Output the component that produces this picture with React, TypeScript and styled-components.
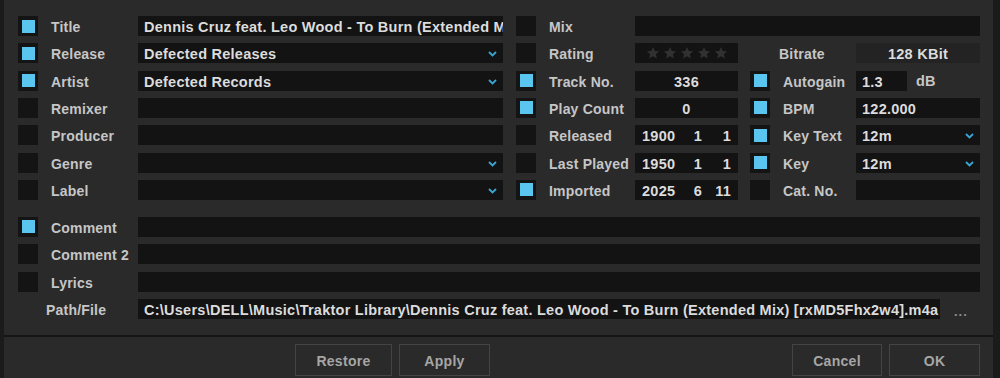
import React from "react";
import styled, { createGlobalStyle } from "styled-components";

const Global = createGlobalStyle`
  html, body { margin: 0; padding: 0; background: #2a2a2a; }
  body { font-family: "Liberation Sans", Arial, sans-serif; }
  * { box-sizing: border-box; }
`;

const Window = styled.div`
  width: 1000px;
  height: 378px;
  display: flex;
  flex-direction: column;
  background: #2a2a2a;
  border-left: 4px solid #1b1b1b;
  border-right: 7px solid #1b1b1b;
  overflow: hidden;
  font-family: "Liberation Sans", Arial, sans-serif;
  font-size: 14px;
  font-weight: bold;
  letter-spacing: 0.2px;
`;

const Form = styled.div`
  display: flex;
  flex-direction: column;
  gap: 17px;
  padding: 16px 0 16px 14px;
  border-bottom: 2px solid #151515;
`;

const TopGrid = styled.div`
  display: grid;
  grid-template-columns: 20px 100px 365px 13px 20px 99px 103px 12px 20px 86px 124px;
  grid-auto-rows: 20px;
  row-gap: 7.33px;
`;

const BottomGrid = styled.div`
  display: grid;
  grid-template-columns: 20px 100px 842px;
  grid-auto-rows: 20px;
  row-gap: 7.33px;
`;

const Check = styled.div<{ $on?: boolean; $col?: number }>`
  grid-column: ${(p) => p.$col ?? 1};
  width: 20px;
  height: 20px;
  background: #141414;
  display: flex;
  align-items: center;
  justify-content: center;
  &::after {
    content: "";
    width: 13px;
    height: 13px;
    background: ${(p) => (p.$on ? "#5ac6ef" : "transparent")};
  }
`;

const Label = styled.div<{ $col?: string; $indent?: number }>`
  grid-column: ${(p) => p.$col ?? "2"};
  padding-left: ${(p) => p.$indent ?? 13}px;
  color: #c6c6c6;
  line-height: 22px;
  white-space: nowrap;
`;

const Field = styled.div<{ $col?: string; $align?: string; $dim?: boolean; $width?: number }>`
  grid-column: ${(p) => p.$col ?? "3"};
  ${(p) => (p.$width ? `width: ${p.$width}px;` : "")}
  height: 20px;
  background: ${(p) => (p.$dim ? "#232323" : "#131313")};
  color: #dcdcdc;
  font-size: 14.5px;
  letter-spacing: 0.25px;
  line-height: 22px;
  padding: 0 6px;
  text-align: ${(p) => p.$align ?? "left"};
  white-space: nowrap;
  overflow: hidden;
  position: relative;
`;

const SelectField = styled(Field)`
  padding-right: 20px;
`;

const Chevron = styled.svg`
  position: absolute;
  right: 6px;
  top: 8px;
`;

const Select: React.FC<{ col?: string; children?: React.ReactNode }> = ({ col, children }) => (
  <SelectField $col={col}>
    {children}
    <Chevron width="9" height="6" viewBox="0 0 9 6">
      <path d="M1 1 L4.5 4.5 L8 1" fill="none" stroke="#3aa6d4" strokeWidth="1.8" />
    </Chevron>
  </SelectField>
);

const DateBox = styled(Field)`
  display: flex;
  padding: 0 7px;
`;

const DatePart = styled.span<{ $w: number }>`
  width: ${(p) => p.$w}px;
  text-align: right;
`;

const DateYear = styled.span`
  width: 40px;
`;

const DateField: React.FC<{ y: string; m: string; d: string }> = ({ y, m, d }) => (
  <DateBox $col="7">
    <DateYear>{y}</DateYear>
    <DatePart $w={20}>{m}</DatePart>
    <DatePart $w={29}>{d}</DatePart>
  </DateBox>
);

const StarsBox = styled(Field)`
  display: flex;
  align-items: center;
  gap: 3px;
  padding: 0 0 0 11px;
`;

const Star = () => (
  <svg width="14" height="14" viewBox="0 0 24 24">
    <path
      d="M12 1.5l3.1 7 7.4.6-5.6 4.9 1.7 7.4L12 17.5l-6.6 3.9 1.7-7.4L1.5 9.1l7.4-.6z"
      fill="#313131"
    />
  </svg>
);

const GainCell = styled.div`
  grid-column: 11;
  display: flex;
  align-items: center;
  gap: 9px;
  color: #c6c6c6;
  font-size: 14.5px;
  line-height: 22px;
`;

const PathCell = styled.div`
  grid-column: 3;
  display: flex;
  align-items: center;
  gap: 14px;
`;

const Ellipsis = styled.span`
  color: #8d8d8d;
  font-size: 13px;
  letter-spacing: 1px;
  padding-top: 6px;
`;

const BottomBar = styled.div`
  flex: 1;
  display: flex;
  align-items: flex-start;
  padding: 7px 13px 0 291px;
`;

const ButtonGroup = styled.div<{ $push?: boolean }>`
  display: flex;
  gap: 7px;
  ${(p) => (p.$push ? "margin-left: auto;" : "")}
`;

const Button = styled.button<{ $w: number }>`
  width: ${(p) => p.$w}px;
  height: 32px;
  background: #2a2a2a;
  border: 1px solid #444444;
  color: #a6a6a6;
  font-family: "Liberation Sans", Arial, sans-serif;
  font-size: 14px;
  font-weight: bold;
  letter-spacing: 0.3px;
  padding: 2px 0 0;
`;

export default function App() {
  return (
    <>
      <Global />
      <Window>
        <Form>
          <TopGrid>
            <Check $on />
            <Label>Title</Label>
            <Field>Dennis Cruz feat. Leo Wood - To Burn (Extended Mix)</Field>
            <Check $col={5} />
            <Label $col="6">Mix</Label>
            <Field $col="7 / span 5" />

            <Check $on />
            <Label>Release</Label>
            <Select>Defected Releases</Select>
            <Check $col={5} />
            <Label $col="6">Rating</Label>
            <StarsBox $col="7">
              <Star />
              <Star />
              <Star />
              <Star />
              <Star />
            </StarsBox>
            <Label $col="9 / span 2" $indent={29}>Bitrate</Label>
            <Field $col="11" $align="center" $dim>128 KBit</Field>

            <Check $on />
            <Label>Artist</Label>
            <Select>Defected Records</Select>
            <Check $col={5} $on />
            <Label $col="6">Track No.</Label>
            <Field $col="7" $align="center">336</Field>
            <Check $col={9} $on />
            <Label $col="10">Autogain</Label>
            <GainCell>
              <Field $width={51}>1.3</Field>
              dB
            </GainCell>

            <Check />
            <Label>Remixer</Label>
            <Field />
            <Check $col={5} $on />
            <Label $col="6">Play Count</Label>
            <Field $col="7" $align="center">0</Field>
            <Check $col={9} $on />
            <Label $col="10">BPM</Label>
            <Field $col="11">122.000</Field>

            <Check />
            <Label>Producer</Label>
            <Field />
            <Check $col={5} />
            <Label $col="6">Released</Label>
            <DateField y="1900" m="1" d="1" />
            <Check $col={9} $on />
            <Label $col="10">Key Text</Label>
            <Select col="11">12m</Select>

            <Check />
            <Label>Genre</Label>
            <Select />
            <Check $col={5} />
            <Label $col="6">Last Played</Label>
            <DateField y="1950" m="1" d="1" />
            <Check $col={9} $on />
            <Label $col="10">Key</Label>
            <Select col="11">12m</Select>

            <Check />
            <Label>Label</Label>
            <Select />
            <Check $col={5} $on />
            <Label $col="6">Imported</Label>
            <DateField y="2025" m="6" d="11" />
            <Check $col={9} />
            <Label $col="10">Cat. No.</Label>
            <Field $col="11" />
          </TopGrid>

          <BottomGrid>
            <Check $on />
            <Label>Comment</Label>
            <Field />

            <Check />
            <Label>Comment 2</Label>
            <Field />

            <Check />
            <Label>Lyrics</Label>
            <Field />

            <Label $col="1 / span 2" $indent={28}>Path/File</Label>
            <PathCell>
              <Field $width={802}>
                C:\Users\DELL\Music\Traktor Library\Dennis Cruz feat. Leo Wood - To Burn (Extended Mix) [rxMD5Fhx2w4].m4a
              </Field>
              <Ellipsis>...</Ellipsis>
            </PathCell>
          </BottomGrid>
        </Form>

        <BottomBar>
          <ButtonGroup>
            <Button $w={97}>Restore</Button>
            <Button $w={91}>Apply</Button>
          </ButtonGroup>
          <ButtonGroup $push>
            <Button $w={90}>Cancel</Button>
            <Button $w={91}>OK</Button>
          </ButtonGroup>
        </BottomBar>
      </Window>
    </>
  );
}
